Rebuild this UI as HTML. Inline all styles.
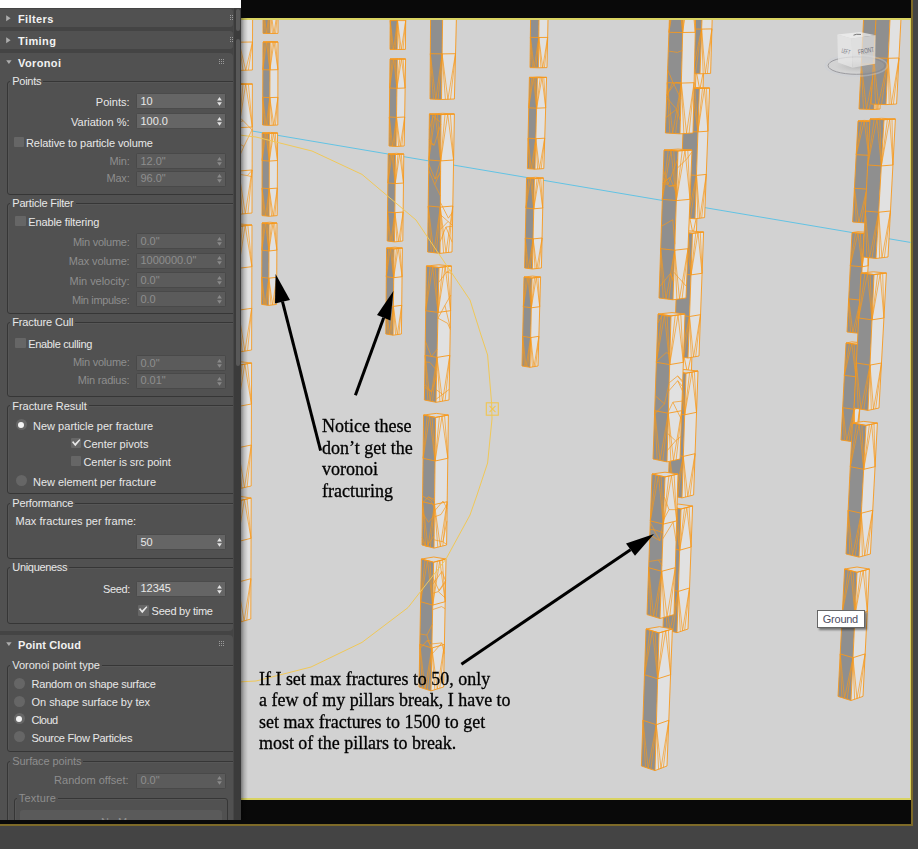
<!DOCTYPE html><html><head><meta charset="utf-8"><title>Voronoi</title><style>
*{margin:0;padding:0;box-sizing:border-box}
html,body{width:918px;height:849px;overflow:hidden;background:#444444}
body{position:relative;font-family:"Liberation Sans",sans-serif;font-size:11px;color:#e8e8e8}
.abs{position:absolute}
#frame{left:0;top:0;width:913px;height:826px;background:#090909;border-right:2px solid #7d6a28;border-bottom:2px solid #7d6a28}
#vp{left:236px;top:18px;width:675px;height:782px;background:#d2d2d2;border-top:2px solid #d9d362;border-bottom:2px solid #d9d362;border-right:1px solid #d9d362}
#white{left:0;top:0;width:241px;height:8px;background:#fff}
#panel{left:0;top:8px;width:241px;height:811.5px;background:#444444;overflow:hidden}
#pshadow{left:241px;top:18px;width:7px;height:802px;background:linear-gradient(to right,rgba(0,0,0,.42),rgba(0,0,0,.16) 45%,rgba(0,0,0,0))}
.ro{position:absolute;left:0;width:233px;background:#515151}
.hd{position:absolute;left:18px;font-weight:bold;font-size:11px;color:#f2f2f2;white-space:nowrap;line-height:14px}
.grp{position:absolute;border:1px solid #363636;border-radius:3px;box-shadow:inset 1px 1px 0 rgba(255,255,255,.04)}
.t{position:absolute;white-space:nowrap;line-height:14px;height:14px;font-size:11px}
.gl{background:#515151;padding:0 2px}
.dis{color:#8e8e8e}
.fld{position:absolute;left:136.4px;width:89.9px;height:16px;background:#656565;border-radius:1.5px;border:1px solid #4b4b4b}
.fld.d{background:#5b5b5b;border-color:#494949}
.fld .v{position:absolute;left:3px;top:-0.4px;line-height:14.5px;font-size:11px;white-space:nowrap}
.cb{position:absolute;width:10.5px;height:10.5px;background:#666666;border-radius:1px}
.rd{position:absolute;width:11px;height:11px;border-radius:50%;background:#666666}
.note{font-family:"Liberation Serif",serif;color:#000;white-space:nowrap;will-change:transform;-webkit-text-stroke:0.3px #000}
.rd.on::after{content:"";position:absolute;left:2.5px;top:2.5px;width:6px;height:6px;border-radius:50%;background:#f4f4f4}
</style></head><body>
<div id="frame" class="abs"></div>
<div id="vp" class="abs"></div>
<svg class="abs" style="left:0;top:0" width="918" height="849" viewBox="0 0 918 849"><defs><clipPath id="vpc"><rect x="236" y="20" width="674.5" height="778"/></clipPath></defs><g clip-path="url(#vpc)"><path d="M252 131 L911 242.5" stroke="#62c3e4" stroke-width="1" fill="none"/>
<polygon points="225.7,-14 239.2,-14 238.9,70.4 225.4,70" fill="#8f8f8f"/><polygon points="239.2,-14 252.7,-14 252.4,70 238.9,70.4" fill="#e1e1e1"/><polygon points="225.7,-14 239.2,-14 252.7,-14 239.2,-14.4" fill="#d9d9d9" stroke="#f7991c" stroke-width="0.85" stroke-linejoin="round"/><path d="M225.7 -14 L225.4 70 L238.9 70.4 L252.4 70 L252.7 -14M239.2 -14 L238.9 70.4M225.7 -14 L239.2 -14 L252.7 -14M225.6 14 L239.1 14 L252.6 14M225.5 42 L239 42.2 L252.5 42" fill="none" stroke="#f7991c" stroke-width="0.85" stroke-linejoin="round"/><path d="M225.6 14 L232.5 -14 L239.1 14M225.6 14 L229.8 -14M239.1 14 L235.2 -14M239.1 14 L246 -14 L252.6 14M239.1 14 L243.3 -14M252.6 14 L248.7 -14M225.5 42 L232.2 70.2 L239 42.2M225.5 42 L229.5 70.1M239 42.2 L234.9 70.3M239 42.2 L245.7 70.2 L252.5 42M239 42.2 L243 70.3M252.5 42 L248.4 70.1" fill="none" stroke="#f7991c" stroke-width="0.66" stroke-linejoin="round"/>
<polygon points="225.4,84 238.9,84.5 238.5,214.3 225,213" fill="#8f8f8f"/><polygon points="238.9,84.5 252.4,84 252,213 238.5,214.3" fill="#e1e1e1"/><polygon points="225.4,84 238.9,84.5 252.4,84 238.9,83.4" fill="#d9d9d9" stroke="#f7991c" stroke-width="0.85" stroke-linejoin="round"/><path d="M225.4 84 L225 213 L238.5 214.3 L252 213 L252.4 84M238.9 84.5 L238.5 214.3M225.4 84 L238.9 84.5 L252.4 84M225.3 127 L238.8 127.7 L252.3 127M225.1 170 L238.6 171 L252.1 170" fill="none" stroke="#f7991c" stroke-width="0.85" stroke-linejoin="round"/><path d="M225.3 127 L232.2 84.2 L238.8 127.7M225.3 127 L229.5 84.1M238.8 127.7 L234.9 84.3M238.8 127.7 L245.7 84.2 L252.3 127M238.8 127.7 L243 84.3M252.3 127 L248.4 84.1M225.1 170 L231.8 213.6 L238.6 171M225.1 170 L229.1 213.4M238.6 171 L234.5 213.9M238.6 171 L245.3 213.6 L252.1 170M238.6 171 L242.6 213.9M252.1 170 L248 213.4M225.3 128 L234.9 117.6 L238.8 133.5M234.9 117.6 L238.8 120.1M225.3 115.4 L230 102.9 L238.8 113.5M230 102.9 L225.3 111M238.8 117 L243.2 120.7 L252.3 130.2M243.2 120.7 L238.8 122.5M225.2 139.1 L230 140.8 L238.7 142.1M230 140.8 L225.3 132.3M238.6 174.2 L247.3 175.6 L252.1 176.8M247.3 175.6 L252.1 170.3M225.2 143.1 L229.9 137.3 L238.7 153.1M229.9 137.3 L225.2 136.7M238.7 143.4 L243.9 146.4 L252.3 129.3M243.9 146.4 L238.7 158.1" fill="none" stroke="#f7991c" stroke-width="0.66" stroke-linejoin="round"/>
<polygon points="225,225 238.5,226.4 238.1,352.2 224.6,350" fill="#8f8f8f"/><polygon points="238.5,226.4 252,225 251.6,350 238.1,352.2" fill="#e1e1e1"/><polygon points="225,225 238.5,226.4 252,225 238.5,223.9" fill="#d9d9d9" stroke="#f7991c" stroke-width="0.85" stroke-linejoin="round"/><path d="M225 225 L224.6 350 L238.1 352.2 L251.6 350 L252 225M238.5 226.4 L238.1 352.2M225 225 L238.5 226.4 L252 225M224.9 266.7 L238.4 268.3 L251.9 266.7M224.7 308.3 L238.2 310.2 L251.7 308.3" fill="none" stroke="#f7991c" stroke-width="0.85" stroke-linejoin="round"/><path d="M224.9 266.7 L231.7 225.7 L238.4 268.3M224.9 266.7 L229 225.4M238.4 268.3 L234.4 226M238.4 268.3 L245.2 225.7 L251.9 266.7M238.4 268.3 L242.5 226M251.9 266.7 L247.9 225.4M224.7 308.3 L231.4 351.1 L238.2 310.2M224.7 308.3 L228.7 350.7M238.2 310.2 L234.1 351.5M238.2 310.2 L244.9 351.1 L251.7 308.3M238.2 310.2 L242.2 351.5M251.7 308.3 L247.6 350.7" fill="none" stroke="#f7991c" stroke-width="0.66" stroke-linejoin="round"/>
<polygon points="224.6,363 238.1,365.3 237.7,489 224.2,486" fill="#8f8f8f"/><polygon points="238.1,365.3 251.6,363 251.2,486 237.7,489" fill="#e1e1e1"/><polygon points="224.6,363 238.1,365.3 251.6,363 238.1,361.5" fill="#d9d9d9" stroke="#f7991c" stroke-width="0.85" stroke-linejoin="round"/><path d="M224.6 363 L224.2 486 L237.7 489 L251.2 486 L251.6 363M238.1 365.3 L237.7 489M224.6 363 L238.1 365.3 L251.6 363M224.4 404 L237.9 406.5 L251.4 404M224.3 445 L237.8 447.8 L251.3 445" fill="none" stroke="#f7991c" stroke-width="0.85" stroke-linejoin="round"/><path d="M224.4 404 L231.3 364.1 L237.9 406.5M224.4 404 L228.6 363.7M237.9 406.5 L234 364.6M237.9 406.5 L244.8 364.1 L251.4 404M237.9 406.5 L242.1 364.6M251.4 404 L247.5 363.7M224.3 445 L231 487.5 L237.8 447.8M224.3 445 L228.3 486.9M237.8 447.8 L233.7 488.1M237.8 447.8 L244.5 487.5 L251.3 445M237.8 447.8 L241.8 488.1M251.3 445 L247.2 486.9" fill="none" stroke="#f7991c" stroke-width="0.66" stroke-linejoin="round"/>
<polygon points="224.2,498 237.7,501.1 237.3,622.9 223.8,619" fill="#8f8f8f"/><polygon points="237.7,501.1 251.2,498 250.8,619 237.3,622.9" fill="#e1e1e1"/><polygon points="224.2,498 237.7,501.1 251.2,498 237.7,496" fill="#d9d9d9" stroke="#f7991c" stroke-width="0.85" stroke-linejoin="round"/><path d="M224.2 498 L223.8 619 L237.3 622.9 L250.8 619 L251.2 498M237.7 501.1 L237.3 622.9M224.2 498 L237.7 501.1 L251.2 498M224 538.3 L237.5 541.7 L251 538.3M223.9 578.7 L237.4 582.3 L250.9 578.7" fill="none" stroke="#f7991c" stroke-width="0.85" stroke-linejoin="round"/><path d="M224 538.3 L230.9 499.6 L237.5 541.7M224 538.3 L228.2 498.9M237.5 541.7 L233.6 500.2M237.5 541.7 L244.4 499.6 L251 538.3M237.5 541.7 L241.7 500.2M251 538.3 L247.1 498.9M223.9 578.7 L230.6 620.9 L237.4 582.3M223.9 578.7 L227.9 620.2M237.4 582.3 L233.3 621.7M237.4 582.3 L244.1 620.9 L250.9 578.7M237.4 582.3 L241.4 621.7M250.9 578.7 L246.8 620.2" fill="none" stroke="#f7991c" stroke-width="0.66" stroke-linejoin="round"/>
<polygon points="263.2,-50 270.2,-50 270.1,33.5 263,33.4" fill="#8f8f8f"/><polygon points="270.2,-50 278.2,-50 278,33.4 270.1,33.5" fill="#e1e1e1"/><polygon points="263.2,-50 270.2,-50 278.2,-50 271.1,-50.4" fill="#d9d9d9" stroke="#f7991c" stroke-width="0.9" stroke-linejoin="round"/><path d="M263.2 -50 L263 33.4 L270.1 33.5 L278 33.4 L278.2 -50M270.2 -50 L270.1 33.5M263.2 -50 L270.2 -50 L278.2 -50M263.1 -22.2 L270.2 -22.2 L278.1 -22.2M263.1 5.6 L270.1 5.6 L278.1 5.6" fill="none" stroke="#f7991c" stroke-width="0.9" stroke-linejoin="round"/><path d="M263.1 -22.2 L266.7 -50 L270.2 -22.2M263.1 -22.2 L265.3 -50M270.2 -22.2 L268.1 -50M270.2 -22.2 L274.2 -50 L278.1 -22.2M270.2 -22.2 L272.6 -50M278.1 -22.2 L275.8 -50M263.1 5.6 L266.5 33.4 L270.1 5.6M263.1 5.6 L265.1 33.4M270.1 5.6 L267.9 33.5M270.1 5.6 L274 33.4 L278.1 5.6M270.1 5.6 L272.4 33.5M278.1 5.6 L275.6 33.4" fill="none" stroke="#f7991c" stroke-width="0.70" stroke-linejoin="round"/>
<polygon points="263,42 270.1,42.1 269.7,125.4 262.6,125" fill="#8f8f8f"/><polygon points="270.1,42.1 278,42 277.8,125 269.7,125.4" fill="#e1e1e1"/><polygon points="263,42 270.1,42.1 278,42 270.9,41.5" fill="#d9d9d9" stroke="#f7991c" stroke-width="0.9" stroke-linejoin="round"/><path d="M263 42 L262.6 125 L269.7 125.4 L277.8 125 L278 42M270.1 42.1 L269.7 125.4M263 42 L270.1 42.1 L278 42M262.9 69.7 L269.9 69.9 L277.9 69.7M262.7 97.3 L269.8 97.6 L277.9 97.3" fill="none" stroke="#f7991c" stroke-width="0.9" stroke-linejoin="round"/><path d="M262.9 69.7 L266.5 42.1 L269.9 69.9M262.9 69.7 L265.1 42M269.9 69.9 L267.9 42.1M269.9 69.9 L274 42.1 L277.9 69.7M269.9 69.9 L272.4 42.1M277.9 69.7 L275.6 42M262.7 97.3 L266.2 125.2 L269.8 97.6M262.7 97.3 L264.7 125.1M269.8 97.6 L267.6 125.3M269.8 97.6 L273.8 125.2 L277.9 97.3M269.8 97.6 L272.2 125.3M277.9 97.3 L275.4 125.1" fill="none" stroke="#f7991c" stroke-width="0.70" stroke-linejoin="round"/>
<polygon points="262.2,133 269.4,133.4 269.1,216.3 262,215.6" fill="#8f8f8f"/><polygon points="269.4,133.4 277.6,133 277.2,215.6 269.1,216.3" fill="#e1e1e1"/><polygon points="262.2,133 269.4,133.4 277.6,133 270.4,132.4" fill="#d9d9d9" stroke="#f7991c" stroke-width="0.9" stroke-linejoin="round"/><path d="M262.2 133 L262 215.6 L269.1 216.3 L277.2 215.6 L277.6 133M269.4 133.4 L269.1 216.3M262.2 133 L269.4 133.4 L277.6 133M262.1 160.5 L269.3 161.1 L277.5 160.5M262.1 188.1 L269.2 188.7 L277.3 188.1" fill="none" stroke="#f7991c" stroke-width="0.9" stroke-linejoin="round"/><path d="M262.1 160.5 L265.8 133.2 L269.3 161.1M262.1 160.5 L264.4 133.1M269.3 161.1 L267.3 133.3M269.3 161.1 L273.5 133.2 L277.5 160.5M269.3 161.1 L271.9 133.3M277.5 160.5 L275.2 133.1M262.1 188.1 L265.6 216 L269.2 188.7M262.1 188.1 L264.1 215.8M269.2 188.7 L267 216.1M269.2 188.7 L273.2 216 L277.3 188.1M269.2 188.7 L271.6 216.1M277.3 188.1 L274.8 215.8" fill="none" stroke="#f7991c" stroke-width="0.70" stroke-linejoin="round"/>
<polygon points="262,223 269.1,223.8 268.7,305.4 261.6,304.4" fill="#8f8f8f"/><polygon points="269.1,223.8 277,223 276.6,304.4 268.7,305.4" fill="#e1e1e1"/><polygon points="262,223 269.1,223.8 277,223 269.9,222.2" fill="#d9d9d9" stroke="#f7991c" stroke-width="0.9" stroke-linejoin="round"/><path d="M262 223 L261.6 304.4 L268.7 305.4 L276.6 304.4 L277 223M269.1 223.8 L268.7 305.4M262 223 L269.1 223.8 L277 223M261.9 250.1 L268.9 251 L276.9 250.1M261.7 277.3 L268.8 278.2 L276.7 277.3" fill="none" stroke="#f7991c" stroke-width="0.9" stroke-linejoin="round"/><path d="M261.9 250.1 L265.5 223.4 L268.9 251M261.9 250.1 L264.1 223.2M268.9 251 L266.9 223.5M268.9 251 L273 223.4 L276.9 250.1M268.9 251 L271.4 223.5M276.9 250.1 L274.6 223.2M261.7 277.3 L265.1 304.9 L268.8 278.2M261.7 277.3 L263.7 304.7M268.8 278.2 L266.5 305.1M268.8 278.2 L272.6 304.9 L276.7 277.3M268.8 278.2 L271 305.1M276.7 277.3 L274.2 304.7" fill="none" stroke="#f7991c" stroke-width="0.70" stroke-linejoin="round"/>
<polygon points="390.6,-37 397.9,-37 397.2,49.5 390,49.4" fill="#8f8f8f"/><polygon points="397.9,-37 406.2,-37 405.4,49.4 397.2,49.5" fill="#e1e1e1"/><polygon points="390.6,-37 397.9,-37 406.2,-37 398.9,-37.4" fill="#d9d9d9" stroke="#f7991c" stroke-width="0.9" stroke-linejoin="round"/><path d="M390.6 -37 L390 49.4 L397.2 49.5 L405.4 49.4 L406.2 -37M397.9 -37 L397.2 49.5M390.6 -37 L397.9 -37 L406.2 -37M390.4 -8.2 L397.7 -8.2 L405.9 -8.2M390.2 20.6 L397.5 20.6 L405.7 20.6" fill="none" stroke="#f7991c" stroke-width="0.9" stroke-linejoin="round"/><path d="M390.4 -8.2 L394.3 -37 L397.7 -8.2M390.4 -8.2 L392.8 -37M397.7 -8.2 L395.7 -37M397.7 -8.2 L402.1 -37 L405.9 -8.2M397.7 -8.2 L400.4 -37M405.9 -8.2 L403.7 -37M390.2 20.6 L393.6 49.5 L397.5 20.6M390.2 20.6 L392.2 49.4M397.5 20.6 L395.1 49.5M397.5 20.6 L401.3 49.5 L405.7 20.6M397.5 20.6 L399.7 49.5M405.7 20.6 L403 49.4" fill="none" stroke="#f7991c" stroke-width="0.70" stroke-linejoin="round"/>
<polygon points="390,59 397.3,59.2 396.1,146.5 389,146" fill="#8f8f8f"/><polygon points="397.3,59.2 405.6,59 404.2,146 396.1,146.5" fill="#e1e1e1"/><polygon points="390,59 397.3,59.2 405.6,59 398.3,58.5" fill="#d9d9d9" stroke="#f7991c" stroke-width="0.9" stroke-linejoin="round"/><path d="M390 59 L389 146 L396.1 146.5 L404.2 146 L405.6 59M397.3 59.2 L396.1 146.5M390 59 L397.3 59.2 L405.6 59M389.7 88 L396.9 88.3 L405.1 88M389.3 117 L396.5 117.4 L404.7 117" fill="none" stroke="#f7991c" stroke-width="0.9" stroke-linejoin="round"/><path d="M389.7 88 L393.7 59.1 L396.9 88.3M389.7 88 L392.2 59.1M396.9 88.3 L395.1 59.1M396.9 88.3 L401.5 59.1 L405.1 88M396.9 88.3 L399.8 59.1M405.1 88 L403.1 59.1M389.3 117 L392.6 146.2 L396.5 117.4M389.3 117 L391.1 146.1M396.5 117.4 L394 146.3M396.5 117.4 L400.2 146.2 L404.7 117M396.5 117.4 L398.6 146.3M404.7 117 L401.8 146.1" fill="none" stroke="#f7991c" stroke-width="0.70" stroke-linejoin="round"/>
<polygon points="388.2,154 395.5,154.5 394.5,241.9 387.2,241" fill="#8f8f8f"/><polygon points="395.5,154.5 403.8,154 402.8,241 394.5,241.9" fill="#e1e1e1"/><polygon points="388.2,154 395.5,154.5 403.8,154 396.5,153.3" fill="#d9d9d9" stroke="#f7991c" stroke-width="0.9" stroke-linejoin="round"/><path d="M388.2 154 L387.2 241 L394.5 241.9 L402.8 241 L403.8 154M395.5 154.5 L394.5 241.9M388.2 154 L395.5 154.5 L403.8 154M387.9 183 L395.2 183.6 L403.5 183M387.5 212 L394.9 212.7 L403.1 212" fill="none" stroke="#f7991c" stroke-width="0.9" stroke-linejoin="round"/><path d="M387.9 183 L391.9 154.3 L395.2 183.6M387.9 183 L390.4 154.2M395.2 183.6 L393.3 154.4M395.2 183.6 L399.7 154.3 L403.5 183M395.2 183.6 L398 154.4M403.5 183 L401.3 154.2M387.5 212 L390.9 241.4 L394.9 212.7M387.5 212 L389.4 241.3M394.9 212.7 L392.3 241.6M394.9 212.7 L398.7 241.4 L403.1 212M394.9 212.7 L397 241.6M403.1 212 L400.3 241.3" fill="none" stroke="#f7991c" stroke-width="0.70" stroke-linejoin="round"/>
<polygon points="386.6,248 394,248.9 393.1,335.2 385.8,334" fill="#8f8f8f"/><polygon points="394,248.9 402.4,248 401.4,334 393.1,335.2" fill="#e1e1e1"/><polygon points="386.6,248 394,248.9 402.4,248 395,247.2" fill="#d9d9d9" stroke="#f7991c" stroke-width="0.9" stroke-linejoin="round"/><path d="M386.6 248 L385.8 334 L393.1 335.2 L401.4 334 L402.4 248M394 248.9 L393.1 335.2M386.6 248 L394 248.9 L402.4 248M386.3 276.7 L393.7 277.7 L402.1 276.7M386.1 305.3 L393.4 306.4 L401.7 305.3" fill="none" stroke="#f7991c" stroke-width="0.9" stroke-linejoin="round"/><path d="M386.3 276.7 L390.3 248.4 L393.7 277.7M386.3 276.7 L388.8 248.3M393.7 277.7 L391.8 248.6M393.7 277.7 L398.2 248.4 L402.1 276.7M393.7 277.7 L396.5 248.6M402.1 276.7 L399.9 248.3M386.1 305.3 L389.5 334.6 L393.4 306.4M386.1 305.3 L388 334.4M393.4 306.4 L390.9 334.8M393.4 306.4 L397.3 334.6 L401.7 305.3M393.4 306.4 L395.6 334.8M401.7 305.3 L398.9 334.4" fill="none" stroke="#f7991c" stroke-width="0.70" stroke-linejoin="round"/>
<polygon points="531.1,-23 539.5,-23 538.4,67.8 530,67.6" fill="#8f8f8f"/><polygon points="539.5,-23 548.9,-23 547,67.6 538.4,67.8" fill="#e1e1e1"/><polygon points="531.1,-23 539.5,-23 548.9,-23 540.5,-23.4" fill="#d9d9d9" stroke="#f7991c" stroke-width="0.9" stroke-linejoin="round"/><path d="M531.1 -23 L530 67.6 L538.4 67.8 L547 67.6 L548.9 -23M539.5 -23 L538.4 67.8M531.1 -23 L539.5 -23 L548.9 -23M530.7 7.2 L539.1 7.2 L548.2 7.2M530.4 37.4 L538.8 37.5 L547.6 37.4" fill="none" stroke="#f7991c" stroke-width="0.9" stroke-linejoin="round"/><path d="M530.7 7.2 L535.3 -23 L539.1 7.2M530.7 7.2 L533.6 -23M539.1 7.2 L537 -23M539.1 7.2 L544.2 -23 L548.2 7.2M539.1 7.2 L542.3 -23M548.2 7.2 L546.1 -23M530.4 37.4 L534.2 67.7 L538.8 37.5M530.4 37.4 L532.5 67.7M538.8 37.5 L535.9 67.8M538.8 37.5 L542.7 67.7 L547.6 37.4M538.8 37.5 L541 67.8M547.6 37.4 L544.4 67.7" fill="none" stroke="#f7991c" stroke-width="0.70" stroke-linejoin="round"/>
<polygon points="529.4,77.4 537.4,77.7 535,169.2 527.4,168.6" fill="#8f8f8f"/><polygon points="537.4,77.7 546.6,77.4 543.8,168.6 535,169.2" fill="#e1e1e1"/><polygon points="529.4,77.4 537.4,77.7 546.6,77.4 538.6,76.9" fill="#d9d9d9" stroke="#f7991c" stroke-width="0.9" stroke-linejoin="round"/><path d="M529.4 77.4 L527.4 168.6 L535 169.2 L543.8 168.6 L546.6 77.4M537.4 77.7 L535 169.2M529.4 77.4 L537.4 77.7 L546.6 77.4M528.7 107.8 L536.6 108.2 L545.7 107.8M528.1 138.2 L535.8 138.7 L544.7 138.2" fill="none" stroke="#f7991c" stroke-width="0.9" stroke-linejoin="round"/><path d="M528.7 107.8 L533.4 77.5 L536.6 108.2M528.7 107.8 L531.8 77.5M536.6 108.2 L535 77.6M536.6 108.2 L542 77.5 L545.7 107.8M536.6 108.2 L540.2 77.6M545.7 107.8 L543.8 77.5M528.1 138.2 L531.2 168.9 L535.8 138.7M528.1 138.2 L529.7 168.8M535.8 138.7 L532.7 169M535.8 138.7 L539.4 168.9 L544.7 138.2M535.8 138.7 L537.6 169M544.7 138.2 L541.2 168.8" fill="none" stroke="#f7991c" stroke-width="0.70" stroke-linejoin="round"/>
<polygon points="526.6,178 534.4,178.7 532.4,269 524.6,268" fill="#8f8f8f"/><polygon points="534.4,178.7 543.4,178 541.4,268 532.4,269" fill="#e1e1e1"/><polygon points="526.6,178 534.4,178.7 543.4,178 535.6,177.3" fill="#d9d9d9" stroke="#f7991c" stroke-width="0.9" stroke-linejoin="round"/><path d="M526.6 178 L524.6 268 L532.4 269 L541.4 268 L543.4 178M534.4 178.7 L532.4 269M526.6 178 L534.4 178.7 L543.4 178M525.9 208 L533.7 208.8 L542.7 208M525.3 238 L533.1 238.9 L542.1 238" fill="none" stroke="#f7991c" stroke-width="0.9" stroke-linejoin="round"/><path d="M525.9 208 L530.5 178.3 L533.7 208.8M525.9 208 L528.9 178.2M533.7 208.8 L532.1 178.5M533.7 208.8 L538.9 178.3 L542.7 208M533.7 208.8 L537.1 178.5M542.7 208 L540.7 178.2M525.3 238 L528.5 268.5 L533.1 238.9M525.3 238 L526.9 268.3M533.1 238.9 L530.1 268.7M533.1 238.9 L536.9 268.5 L542.1 238M533.1 238.9 L535.1 268.7M542.1 238 L538.7 268.3" fill="none" stroke="#f7991c" stroke-width="0.70" stroke-linejoin="round"/>
<polygon points="524,277 532,278 530,367.3 522,366" fill="#8f8f8f"/><polygon points="532,278 540.6,277 538,366 530,367.3" fill="#e1e1e1"/><polygon points="524,277 532,278 540.6,277 532.6,276.1" fill="#d9d9d9" stroke="#f7991c" stroke-width="0.9" stroke-linejoin="round"/><path d="M524 277 L522 366 L530 367.3 L538 366 L540.6 277M532 278 L530 367.3M524 277 L532 278 L540.6 277M523.3 306.7 L531.3 307.8 L539.7 306.7M522.7 336.3 L530.7 337.6 L538.9 336.3" fill="none" stroke="#f7991c" stroke-width="0.9" stroke-linejoin="round"/><path d="M523.3 306.7 L528 277.5 L531.3 307.8M523.3 306.7 L526.4 277.3M531.3 307.8 L529.6 277.7M531.3 307.8 L536.3 277.5 L539.7 306.7M531.3 307.8 L534.6 277.7M539.7 306.7 L538 277.3M522.7 336.3 L526 366.7 L530.7 337.6M522.7 336.3 L524.4 366.4M530.7 337.6 L527.6 366.9M530.7 337.6 L534 366.7 L538.9 336.3M530.7 337.6 L532.4 366.9M538.9 336.3 L535.6 366.4" fill="none" stroke="#f7991c" stroke-width="0.70" stroke-linejoin="round"/>
<polygon points="431,-37 443.4,-37 441.5,99.5 430,99" fill="#8f8f8f"/><polygon points="443.4,-37 457.8,-37 454.4,99 441.5,99.5" fill="#e1e1e1"/><polygon points="431,-37 443.4,-37 457.8,-37 445.4,-37.4" fill="#d9d9d9" stroke="#f7991c" stroke-width="0.9" stroke-linejoin="round"/><path d="M431 -37 L430 99 L441.5 99.5 L454.4 99 L457.8 -37M443.4 -37 L441.5 99.5M431 -37 L443.4 -37 L457.8 -37M430.7 8.3 L442.7 8.3 L456.7 8.3M430.3 53.7 L442.1 53.9 L455.5 53.7" fill="none" stroke="#f7991c" stroke-width="0.9" stroke-linejoin="round"/><path d="M430.7 8.3 L437.2 -37 L442.7 8.3M430.7 8.3 L434.7 -37M442.7 8.3 L439.7 -37M442.7 8.3 L450.6 -37 L456.7 8.3M442.7 8.3 L447.7 -37M456.7 8.3 L453.5 -37M430.3 53.7 L435.8 99.3 L442.1 53.9M430.3 53.7 L433.4 99.2M442.1 53.9 L438.1 99.4M442.1 53.9 L447.9 99.3 L455.5 53.7M442.1 53.9 L445.4 99.4M455.5 53.7 L450.5 99.2" fill="none" stroke="#f7991c" stroke-width="0.70" stroke-linejoin="round"/>
<polygon points="429.4,114 441,114.6 440,253.4 427.6,252" fill="#8f8f8f"/><polygon points="441,114.6 454.4,114 452,252 440,253.4" fill="#e1e1e1"/><polygon points="429.4,114 441,114.6 454.4,114 442.8,113.3" fill="#d9d9d9" stroke="#f7991c" stroke-width="0.9" stroke-linejoin="round"/><path d="M429.4 114 L427.6 252 L440 253.4 L452 252 L454.4 114M441 114.6 L440 253.4M429.4 114 L441 114.6 L454.4 114M428.8 160 L440.7 160.9 L453.6 160M428.2 206 L440.3 207.1 L452.8 206" fill="none" stroke="#f7991c" stroke-width="0.9" stroke-linejoin="round"/><path d="M428.8 160 L435.2 114.3 L440.7 160.9M428.8 160 L432.9 114.2M440.7 160.9 L437.5 114.4M440.7 160.9 L447.7 114.3 L453.6 160M440.7 160.9 L445 114.4M453.6 160 L450.4 114.2M428.2 206 L433.8 252.7 L440.3 207.1M428.2 206 L431.3 252.4M440.3 207.1 L436.3 253M440.3 207.1 L446 252.7 L452.8 206M440.3 207.1 L443.6 253M452.8 206 L448.4 252.4M440.1 241.7 L445.9 227 L452.2 242.3M445.9 227 L452.4 226.3M429.2 129.4 L433.2 116.3 L440.9 122.5M440.4 202.4 L448.4 218.2 L452.7 211.9M428.7 164 L435.1 179.1 L440.7 160.1M435.1 179.1 L440.6 173.7M428.7 170.3 L434.8 184.6 L440.6 171.1M434.8 184.6 L440.4 195.8M440.2 229.5 L448.1 221.5 L452.5 225.4M448.1 221.5 L440.3 214.6M429.1 139.7 L434.1 145.3 L440.9 124.2M434.1 145.3 L429 142.7" fill="none" stroke="#f7991c" stroke-width="0.70" stroke-linejoin="round"/>
<polygon points="426.4,266 439,267.5 436,402.3 424.4,400" fill="#8f8f8f"/><polygon points="439,267.5 451.4,266 449,400 436,402.3" fill="#e1e1e1"/><polygon points="426.4,266 439,267.5 451.4,266 438.8,264.8" fill="#d9d9d9" stroke="#f7991c" stroke-width="0.9" stroke-linejoin="round"/><path d="M426.4 266 L424.4 400 L436 402.3 L449 400 L451.4 266M439 267.5 L436 402.3M426.4 266 L439 267.5 L451.4 266M425.7 310.7 L438 312.4 L450.6 310.7M425.1 355.3 L437 357.4 L449.8 355.3" fill="none" stroke="#f7991c" stroke-width="0.9" stroke-linejoin="round"/><path d="M425.7 310.7 L432.7 266.8 L438 312.4M425.7 310.7 L430.2 266.5M438 312.4 L435.2 267.1M438 312.4 L445.2 266.8 L450.6 310.7M438 312.4 L442.7 267.1M450.6 310.7 L447.7 266.5M425.1 355.3 L430.2 401.1 L437 357.4M425.1 355.3 L427.9 400.7M437 357.4 L432.5 401.6M437 357.4 L442.5 401.1 L449.8 355.3M437 357.4 L439.9 401.6M449.8 355.3 L445.1 400.7M425.3 341 L431.4 356.6 L437.2 349.1M436.3 389.7 L442.6 394.4 L449.2 389.4M442.6 394.4 L436.1 399.2M438.7 282.4 L446.3 272.2 L451.3 270M446.3 272.2 L451.3 273.2M424.6 387.1 L431.6 391.9 L436.6 375.4M431.6 391.9 L424.6 384.2M437.9 318.4 L444.9 305.4 L450.3 327.8M444.9 305.4 L450.9 295M425 362 L429.8 362.3 L436.7 370.3M437.9 318.1 L447.7 323.4 L450.3 329.6" fill="none" stroke="#f7991c" stroke-width="0.70" stroke-linejoin="round"/>
<polygon points="423.6,415 435.6,417.4 434,548.1 422,545" fill="#8f8f8f"/><polygon points="435.6,417.4 448.4,415 446.6,545 434,548.1" fill="#e1e1e1"/><polygon points="423.6,415 435.6,417.4 448.4,415 436.4,413.4" fill="#d9d9d9" stroke="#f7991c" stroke-width="0.9" stroke-linejoin="round"/><path d="M423.6 415 L422 545 L434 548.1 L446.6 545 L448.4 415M435.6 417.4 L434 548.1M423.6 415 L435.6 417.4 L448.4 415M423.1 458.3 L435.1 461 L447.8 458.3M422.5 501.7 L434.5 504.5 L447.2 501.7" fill="none" stroke="#f7991c" stroke-width="0.9" stroke-linejoin="round"/><path d="M423.1 458.3 L429.6 416.2 L435.1 461M423.1 458.3 L427.2 415.7M435.1 461 L432 416.7M435.1 461 L442 416.2 L447.8 458.3M435.1 461 L439.4 416.7M447.8 458.3 L444.6 415.7M422.5 501.7 L428 546.6 L434.5 504.5M422.5 501.7 L425.6 545.9M434.5 504.5 L430.4 547.2M434.5 504.5 L440.3 546.6 L447.2 501.7M434.5 504.5 L437.8 547.2M447.2 501.7 L442.8 545.9M422.5 503 L428.3 496.9 L434.6 501.7M428.3 496.9 L434.6 499.4M422.6 496 L431 500.9 L434.5 507.9M434.5 511 L443 501 L447.1 508.6M434.4 516.9 L441 514.5 L447.2 504.4M422.1 537.1 L426.2 546.6 L434.1 535.9M426.2 546.6 L422.1 540.8M434.1 539.8 L442.9 541.8 L446.9 521.2M442.9 541.8 L446.6 544.4M422.4 513 L428.5 522.3 L434.4 515.3" fill="none" stroke="#f7991c" stroke-width="0.70" stroke-linejoin="round"/>
<polygon points="421.4,559 433.6,562.2 431,690.9 419,687" fill="#8f8f8f"/><polygon points="433.6,562.2 446,559 443.6,687 431,690.9" fill="#e1e1e1"/><polygon points="421.4,559 433.6,562.2 446,559 433.8,557" fill="#d9d9d9" stroke="#f7991c" stroke-width="0.9" stroke-linejoin="round"/><path d="M421.4 559 L419 687 L431 690.9 L443.6 687 L446 559M433.6 562.2 L431 690.9M421.4 559 L433.6 562.2 L446 559M420.6 601.7 L432.7 605.1 L445.2 601.7M419.8 644.3 L431.9 648 L444.4 644.3" fill="none" stroke="#f7991c" stroke-width="0.9" stroke-linejoin="round"/><path d="M420.6 601.7 L427.5 560.6 L432.7 605.1M420.6 601.7 L425.1 560M432.7 605.1 L429.9 561.2M432.7 605.1 L439.8 560.6 L445.2 601.7M432.7 605.1 L437.3 561.2M445.2 601.7 L442.3 560M419.8 644.3 L425 689 L431.9 648M419.8 644.3 L422.6 688.2M431.9 648 L427.4 689.8M431.9 648 L437.3 689 L444.4 644.3M431.9 648 L434.8 689.8M444.4 644.3 L439.8 688.2M433.3 578.7 L439.2 590.8 L445.6 582.2M419.7 648.9 L427.1 640.6 L432 641.1M427.1 640.6 L431.9 646.4M420 634 L426.9 635.1 L431.8 651.2M426.9 635.1 L432.3 624.4M431.9 643.9 L441.9 642.9 L444.2 653.6M441.9 642.9 L431.7 654.4M433 593.3 L438.3 591.6 L445.3 598M438.3 591.6 L445.6 580.5M432.6 609.6 L441.6 606.6 L445.1 608.7M433.2 583.8 L441.9 571.4 L445.6 580.8" fill="none" stroke="#f7991c" stroke-width="0.70" stroke-linejoin="round"/>
<polygon points="696,70 703.6,70 703,90 695.4,90" fill="#e1e1e1" stroke="#f7991c" stroke-width="0.9"/><path d="M696 70 L699.8 90 L703.6 70" fill="none" stroke="#f7991c" stroke-width="0.8"/>
<polygon points="689,214 697,214 696.4,234 688.4,234" fill="#e1e1e1" stroke="#f7991c" stroke-width="0.9"/><path d="M689 214 L693 234 L697 214" fill="none" stroke="#f7991c" stroke-width="0.8"/>
<polygon points="683,352 692,352 691.4,373 682.4,373" fill="#e1e1e1" stroke="#f7991c" stroke-width="0.9"/><path d="M683 352 L687.5 373 L692 352" fill="none" stroke="#f7991c" stroke-width="0.8"/>
<polygon points="688.2,-60 704.9,-60 700,73.8 684.5,73.4" fill="#8f8f8f"/><polygon points="704.9,-60 714.5,-60 710.6,73.4 700,73.8" fill="#e1e1e1"/><polygon points="688.2,-60 704.9,-60 714.5,-60 697.8,-60.4" fill="#d9d9d9" stroke="#f7991c" stroke-width="0.9" stroke-linejoin="round"/><path d="M688.2 -60 L684.5 73.4 L700 73.8 L710.6 73.4 L714.5 -60M704.9 -60 L700 73.8M688.2 -60 L704.9 -60 L714.5 -60M687 -15.5 L703.3 -15.5 L713.2 -15.5M685.7 28.9 L701.6 29.1 L711.9 28.9" fill="none" stroke="#f7991c" stroke-width="0.9" stroke-linejoin="round"/><path d="M687 -15.5 L696.5 -60 L703.3 -15.5M687 -15.5 L693.2 -60M703.3 -15.5 L699.9 -60M703.3 -15.5 L709.7 -60 L713.2 -15.5M703.3 -15.5 L707.8 -60M713.2 -15.5 L711.6 -60M685.7 28.9 L692.2 73.6 L701.6 29.1M685.7 28.9 L689.1 73.5M701.6 29.1 L695.4 73.7M701.6 29.1 L705.3 73.6 L711.9 28.9M701.6 29.1 L703.2 73.7M711.9 28.9 L707.4 73.5" fill="none" stroke="#f7991c" stroke-width="0.70" stroke-linejoin="round"/>
<polygon points="684.5,88 699.4,88.5 695,218.8 680,217.6" fill="#8f8f8f"/><polygon points="699.4,88.5 709.6,88 704.6,217.6 695,218.8" fill="#e1e1e1"/><polygon points="684.5,88 699.4,88.5 709.6,88 694.7,87.4" fill="#d9d9d9" stroke="#f7991c" stroke-width="0.9" stroke-linejoin="round"/><path d="M684.5 88 L680 217.6 L695 218.8 L704.6 217.6 L709.6 88M699.4 88.5 L695 218.8M684.5 88 L699.4 88.5 L709.6 88M683 131.2 L697.9 131.9 L707.9 131.2M681.5 174.4 L696.5 175.4 L706.3 174.4" fill="none" stroke="#f7991c" stroke-width="0.9" stroke-linejoin="round"/><path d="M683 131.2 L692 88.2 L697.9 131.9M683 131.2 L689 88.1M697.9 131.9 L694.9 88.3M697.9 131.9 L704.5 88.2 L707.9 131.2M697.9 131.9 L702.5 88.3M707.9 131.2 L706.5 88.1M681.5 174.4 L687.5 218.2 L696.5 175.4M681.5 174.4 L684.5 218M696.5 175.4 L690.5 218.4M696.5 175.4 L699.8 218.2 L706.3 174.4M696.5 175.4 L697.9 218.4M706.3 174.4 L701.7 218" fill="none" stroke="#f7991c" stroke-width="0.70" stroke-linejoin="round"/>
<polygon points="678.5,232 692.5,233.3 688,358 674,356" fill="#8f8f8f"/><polygon points="692.5,233.3 703.6,232 699,356 688,358" fill="#e1e1e1"/><polygon points="678.5,232 692.5,233.3 703.6,232 689.6,230.9" fill="#d9d9d9" stroke="#f7991c" stroke-width="0.9" stroke-linejoin="round"/><path d="M678.5 232 L674 356 L688 358 L699 356 L703.6 232M692.5 233.3 L688 358M678.5 232 L692.5 233.3 L703.6 232M677 273.3 L691 274.9 L702.1 273.3M675.5 314.7 L689.5 316.5 L700.5 314.7" fill="none" stroke="#f7991c" stroke-width="0.9" stroke-linejoin="round"/><path d="M677 273.3 L685.5 232.7 L691 274.9M677 273.3 L682.7 232.4M691 274.9 L688.3 232.9M691 274.9 L698 232.7 L702.1 273.3M691 274.9 L695.8 232.9M702.1 273.3 L700.3 232.4M675.5 314.7 L681 357 L689.5 316.5M675.5 314.7 L678.2 356.6M689.5 316.5 L683.8 357.4M689.5 316.5 L693.5 357 L700.5 314.7M689.5 316.5 L691.3 357.4M700.5 314.7 L695.7 356.6" fill="none" stroke="#f7991c" stroke-width="0.70" stroke-linejoin="round"/>
<polygon points="672,371 686,373.2 682,497.9 668,495" fill="#8f8f8f"/><polygon points="686,373.2 698,371 693.6,495 682,497.9" fill="#e1e1e1"/><polygon points="672,371 686,373.2 698,371 684,369.5" fill="#d9d9d9" stroke="#f7991c" stroke-width="0.9" stroke-linejoin="round"/><path d="M672 371 L668 495 L682 497.9 L693.6 495 L698 371M686 373.2 L682 497.9M672 371 L686 373.2 L698 371M670.7 412.3 L684.7 414.8 L696.5 412.3M669.3 453.7 L683.3 456.4 L695.1 453.7" fill="none" stroke="#f7991c" stroke-width="0.9" stroke-linejoin="round"/><path d="M670.7 412.3 L679 372.1 L684.7 414.8M670.7 412.3 L676.2 371.7M684.7 414.8 L681.8 372.6M684.7 414.8 L692 372.1 L696.5 412.3M684.7 414.8 L689.6 372.6M696.5 412.3 L694.4 371.7M669.3 453.7 L675 496.5 L683.3 456.4M669.3 453.7 L672.2 495.9M683.3 456.4 L677.8 497.1M683.3 456.4 L687.8 496.5 L695.1 453.7M683.3 456.4 L685.5 497.1M695.1 453.7 L690.1 495.9" fill="none" stroke="#f7991c" stroke-width="0.70" stroke-linejoin="round"/>
<polygon points="667,506 681,509 677,632.7 663,629" fill="#8f8f8f"/><polygon points="681,509 692.6,506 688,629 677,632.7" fill="#e1e1e1"/><polygon points="667,506 681,509 692.6,506 678.6,504.1" fill="#d9d9d9" stroke="#f7991c" stroke-width="0.9" stroke-linejoin="round"/><path d="M667 506 L663 629 L677 632.7 L688 629 L692.6 506M681 509 L677 632.7M667 506 L681 509 L692.6 506M665.7 547 L679.7 550.2 L691.1 547M664.3 588 L678.3 591.4 L689.5 588" fill="none" stroke="#f7991c" stroke-width="0.9" stroke-linejoin="round"/><path d="M665.7 547 L674 507.5 L679.7 550.2M665.7 547 L671.2 506.9M679.7 550.2 L676.8 508.1M679.7 550.2 L686.8 507.5 L691.1 547M679.7 550.2 L684.5 508.1M691.1 547 L689.1 506.9M664.3 588 L670 630.8 L678.3 591.4M664.3 588 L667.2 630.1M678.3 591.4 L672.8 631.6M678.3 591.4 L682.5 630.8 L689.5 588M678.3 591.4 L680.3 631.6M689.5 588 L684.7 630.1" fill="none" stroke="#f7991c" stroke-width="0.70" stroke-linejoin="round"/>
<polygon points="670.7,-18 684,-18 680,133.8 665.4,133" fill="#8f8f8f"/><polygon points="684,-18 696.4,-18 693,133 680,133.8" fill="#e1e1e1"/><polygon points="670.7,-18 684,-18 696.4,-18 683.2,-18.4" fill="#d9d9d9" stroke="#f7991c" stroke-width="0.9" stroke-linejoin="round"/><path d="M670.7 -18 L665.4 133 L680 133.8 L693 133 L696.4 -18M684 -18 L680 133.8M670.7 -18 L684 -18 L696.4 -18M668.9 32.3 L682.6 32.5 L695.3 32.3M667.2 82.7 L681.3 83.1 L694.1 82.7" fill="none" stroke="#f7991c" stroke-width="0.9" stroke-linejoin="round"/><path d="M668.9 32.3 L677.3 -18 L682.6 32.5M668.9 32.3 L674.7 -18M682.6 32.5 L680 -18M682.6 32.5 L690.2 -18 L695.3 32.3M682.6 32.5 L687.7 -18M695.3 32.3 L692.7 -18M667.2 82.7 L672.7 133.4 L681.3 83.1M667.2 82.7 L669.8 133.2M681.3 83.1 L675.6 133.6M681.3 83.1 L686.5 133.4 L694.1 82.7M681.3 83.1 L683.9 133.6M694.1 82.7 L689.1 133.2M666.7 95 L675.4 82.6 L681.3 82.5M675.4 82.6 L681.3 83.3M666.7 96.1 L672.8 82.1 L680.9 98.9M672.8 82.1 L667.6 69.7M683.7 -6.7 L690.9 7.6 L696.4 -18M690.9 7.6 L695.9 8M668.3 51 L677.3 52.4 L682.2 50.5M665.9 117.6 L676.6 109.2 L680.3 120.5M676.6 109.2 L666.6 97.5" fill="none" stroke="#f7991c" stroke-width="0.70" stroke-linejoin="round"/>
<polygon points="664,150 678,150.9 673,299.8 659,298" fill="#8f8f8f"/><polygon points="678,150.9 692,150 686,298 673,299.8" fill="#e1e1e1"/><polygon points="664,150 678,150.9 692,150 678,149.1" fill="#d9d9d9" stroke="#f7991c" stroke-width="0.9" stroke-linejoin="round"/><path d="M664 150 L659 298 L673 299.8 L686 298 L692 150M678 150.9 L673 299.8M664 150 L678 150.9 L692 150M662.3 199.3 L676.3 200.6 L690 199.3M660.7 248.7 L674.7 250.2 L688 248.7" fill="none" stroke="#f7991c" stroke-width="0.9" stroke-linejoin="round"/><path d="M662.3 199.3 L671 150.5 L676.3 200.6M662.3 199.3 L668.2 150.3M676.3 200.6 L673.8 150.6M676.3 200.6 L685 150.5 L690 199.3M676.3 200.6 L682.2 150.6M690 199.3 L687.8 150.3M660.7 248.7 L666 298.9 L674.7 250.2M660.7 248.7 L663.2 298.6M674.7 250.2 L668.8 299.3M674.7 250.2 L679.5 298.9 L688 248.7M674.7 250.2 L676.9 299.3M688 248.7 L682.1 298.6M677.4 168.1 L687.4 158.3 L691.9 151.9M663.1 178 L668.8 186.2 L676.9 184.8M668.8 186.2 L676.8 185.8M663.3 169.9 L668.2 184.2 L677.7 158.9M668.2 184.2 L662.8 184.1M662.9 183.5 L669.7 177.6 L676.6 192.6M669.7 177.6 L662.9 183M661.4 226.3 L672.8 219.7 L674.9 244.2M659.4 286.8 L670.4 273.6 L673.7 280.2M670.4 273.6 L673.6 282.1M673.9 272.2 L678.6 277.7 L686.5 286.4" fill="none" stroke="#f7991c" stroke-width="0.70" stroke-linejoin="round"/>
<polygon points="658,314 671,315.9 667,461.9 653,459" fill="#8f8f8f"/><polygon points="671,315.9 685,314 680,459 667,461.9" fill="#e1e1e1"/><polygon points="658,314 671,315.9 685,314 672,312.6" fill="#d9d9d9" stroke="#f7991c" stroke-width="0.9" stroke-linejoin="round"/><path d="M658 314 L653 459 L667 461.9 L680 459 L685 314M671 315.9 L667 461.9M658 314 L671 315.9 L685 314M656.3 362.3 L669.7 364.6 L683.3 362.3M654.7 410.7 L668.3 413.2 L681.7 410.7" fill="none" stroke="#f7991c" stroke-width="0.9" stroke-linejoin="round"/><path d="M656.3 362.3 L664.5 315 L669.7 364.6M656.3 362.3 L661.9 314.6M669.7 364.6 L667.1 315.4M669.7 364.6 L678 315 L683.3 362.3M669.7 364.6 L675.2 315.4M683.3 362.3 L680.8 314.6M654.7 410.7 L660 460.4 L668.3 413.2M654.7 410.7 L657.2 459.9M668.3 413.2 L662.8 461M668.3 413.2 L673.5 460.4 L681.7 410.7M668.3 413.2 L670.9 461M681.7 410.7 L676.1 459.9M655.2 395.7 L664.5 403.9 L669.1 383.8M664.5 403.9 L654.5 414.2M657.7 323.4 L662.3 315 L671 317.1M669.2 382.8 L677.6 376 L682.6 382.3M677.6 376 L682.7 380.9M667.3 450.5 L675.6 440.8 L680.8 436.6M675.6 440.8 L667.8 433.6M668.4 411.5 L672.9 402.2 L681.4 419.5M672.9 402.2 L682 401.1M668.9 390.8 L677.7 380.7 L682.5 386.5M677.7 380.7 L682.4 390.8M656.4 361.4 L666.2 352.6 L670 354.2" fill="none" stroke="#f7991c" stroke-width="0.70" stroke-linejoin="round"/>
<polygon points="652,474 665,476.9 660,618.5 647,614.6" fill="#8f8f8f"/><polygon points="665,476.9 678,474 674,614.6 660,618.5" fill="#e1e1e1"/><polygon points="652,474 665,476.9 678,474 665,472.2" fill="#d9d9d9" stroke="#f7991c" stroke-width="0.9" stroke-linejoin="round"/><path d="M652 474 L647 614.6 L660 618.5 L674 614.6 L678 474M665 476.9 L660 618.5M652 474 L665 476.9 L678 474M650.3 520.9 L663.3 524.1 L676.7 520.9M648.7 567.7 L661.7 571.3 L675.3 567.7" fill="none" stroke="#f7991c" stroke-width="0.9" stroke-linejoin="round"/><path d="M650.3 520.9 L658.5 475.4 L663.3 524.1M650.3 520.9 L655.9 474.9M663.3 524.1 L661.1 476M663.3 524.1 L671.5 475.4 L676.7 520.9M663.3 524.1 L668.9 476M676.7 520.9 L674.1 474.9M648.7 567.7 L653.5 616.5 L661.7 571.3M648.7 567.7 L650.9 615.8M661.7 571.3 L656.1 617.3M661.7 571.3 L667 616.5 L675.3 567.7M661.7 571.3 L664.2 617.3M675.3 567.7 L669.8 615.8M648.9 561.5 L658.3 560 L662.1 559.8M658.3 560 L661.9 565.3M662.8 538.8 L673.1 522.1 L676.1 541.1M663.5 519.9 L669 509.6 L677 509.7M669 509.6 L664.3 497M650.3 522.7 L659.9 540.7 L663.5 519.9M659.9 540.7 L649.8 535M650 529.3 L655.6 530.1 L663 532.7" fill="none" stroke="#f7991c" stroke-width="0.70" stroke-linejoin="round"/>
<polygon points="646,629 659,632.9 655,770.6 641.4,766" fill="#8f8f8f"/><polygon points="659,632.9 672.4,629 667,766 655,770.6" fill="#e1e1e1"/><polygon points="646,629 659,632.9 672.4,629 659.4,626.7" fill="#d9d9d9" stroke="#f7991c" stroke-width="0.9" stroke-linejoin="round"/><path d="M646 629 L641.4 766 L655 770.6 L667 766 L672.4 629M659 632.9 L655 770.6M646 629 L659 632.9 L672.4 629M644.5 674.7 L657.7 678.8 L670.6 674.7M642.9 720.3 L656.3 724.7 L668.8 720.3" fill="none" stroke="#f7991c" stroke-width="0.9" stroke-linejoin="round"/><path d="M644.5 674.7 L652.5 630.9 L657.7 678.8M644.5 674.7 L649.9 630.2M657.7 678.8 L655.1 631.7M657.7 678.8 L665.7 630.9 L670.6 674.7M657.7 678.8 L663 631.7M670.6 674.7 L668.4 630.2M642.9 720.3 L648.2 768.3 L656.3 724.7M642.9 720.3 L645.5 767.4M656.3 724.7 L650.9 769.2M656.3 724.7 L661 768.3 L668.8 720.3M656.3 724.7 L658.6 769.2M668.8 720.3 L663.4 767.4" fill="none" stroke="#f7991c" stroke-width="0.70" stroke-linejoin="round"/>
<polygon points="865.9,-26 877.6,-26 874,109.5 859,109" fill="#8f8f8f"/><polygon points="877.6,-26 883,-26 880,109 874,109.5" fill="#e1e1e1"/><polygon points="865.9,-26 877.6,-26 883,-26 871.3,-26.4" fill="#d9d9d9" stroke="#f7991c" stroke-width="0.9" stroke-linejoin="round"/><path d="M865.9 -26 L859 109 L874 109.5 L880 109 L883 -26M877.6 -26 L874 109.5M865.9 -26 L877.6 -26 L883 -26M863.6 19 L876.4 19 L882 19M861.3 64 L875.2 64.3 L881 64" fill="none" stroke="#f7991c" stroke-width="0.9" stroke-linejoin="round"/><path d="M863.6 19 L871.8 -26 L876.4 19M863.6 19 L869.4 -26M876.4 19 L874.1 -26M876.4 19 L880.3 -26 L882 19M876.4 19 L879.2 -26M882 19 L881.4 -26M861.3 64 L866.5 109.2 L875.2 64.3M861.3 64 L863.5 109.1M875.2 64.3 L869.5 109.3M875.2 64.3 L877 109.2 L881 64M875.2 64.3 L875.8 109.3M881 64 L878.2 109.1" fill="none" stroke="#f7991c" stroke-width="0.70" stroke-linejoin="round"/>
<polygon points="858,121 870.4,121.5 865,222.9 852.6,222" fill="#8f8f8f"/><polygon points="870.4,121.5 876.5,121 871,222 865,222.9" fill="#e1e1e1"/><polygon points="858,121 870.4,121.5 876.5,121 864.1,120.4" fill="#d9d9d9" stroke="#f7991c" stroke-width="0.9" stroke-linejoin="round"/><path d="M858 121 L852.6 222 L865 222.9 L871 222 L876.5 121M870.4 121.5 L865 222.9M858 121 L870.4 121.5 L876.5 121M856.2 154.7 L868.6 155.3 L874.7 154.7M854.4 188.3 L866.8 189.1 L872.8 188.3" fill="none" stroke="#f7991c" stroke-width="0.9" stroke-linejoin="round"/><path d="M856.2 154.7 L864.2 121.2 L868.6 155.3M856.2 154.7 L861.7 121.1M868.6 155.3 L866.7 121.3M868.6 155.3 L873.5 121.2 L874.7 154.7M868.6 155.3 L872.2 121.3M874.7 154.7 L874.7 121.1M854.4 188.3 L858.8 222.5 L866.8 189.1M854.4 188.3 L856.3 222.3M866.8 189.1 L861.3 222.6M866.8 189.1 L868 222.5 L872.8 188.3M866.8 189.1 L866.8 222.6M872.8 188.3 L869.2 222.3" fill="none" stroke="#f7991c" stroke-width="0.70" stroke-linejoin="round"/>
<polygon points="852,232.6 864,233.5 858.6,333.3 847,332" fill="#8f8f8f"/><polygon points="864,233.5 870,232.6 864.5,332 858.6,333.3" fill="#e1e1e1"/><polygon points="852,232.6 864,233.5 870,232.6 858,231.7" fill="#d9d9d9" stroke="#f7991c" stroke-width="0.9" stroke-linejoin="round"/><path d="M852 232.6 L847 332 L858.6 333.3 L864.5 332 L870 232.6M864 233.5 L858.6 333.3M852 232.6 L864 233.5 L870 232.6M850.3 265.7 L862.2 266.8 L868.2 265.7M848.7 298.9 L860.4 300.1 L866.3 298.9" fill="none" stroke="#f7991c" stroke-width="0.9" stroke-linejoin="round"/><path d="M850.3 265.7 L858 233.1 L862.2 266.8M850.3 265.7 L855.6 232.9M862.2 266.8 L860.4 233.3M862.2 266.8 L867 233.1 L868.2 265.7M862.2 266.8 L865.8 233.3M868.2 265.7 L868.2 232.9M848.7 298.9 L852.8 332.7 L860.4 300.1M848.7 298.9 L850.5 332.4M860.4 300.1 L855.1 332.9M860.4 300.1 L861.5 332.7 L866.3 298.9M860.4 300.1 L860.4 332.9M866.3 298.9 L862.7 332.4" fill="none" stroke="#f7991c" stroke-width="0.70" stroke-linejoin="round"/>
<polygon points="846,343 857.6,344.4 852.4,441.7 841,440" fill="#8f8f8f"/><polygon points="857.6,344.4 863.5,343 858,440 852.4,441.7" fill="#e1e1e1"/><polygon points="846,343 857.6,344.4 863.5,343 851.9,341.9" fill="#d9d9d9" stroke="#f7991c" stroke-width="0.9" stroke-linejoin="round"/><path d="M846 343 L841 440 L852.4 441.7 L858 440 L863.5 343M857.6 344.4 L852.4 441.7M846 343 L857.6 344.4 L863.5 343M844.3 375.3 L855.9 376.8 L861.7 375.3M842.7 407.7 L854.1 409.3 L859.8 407.7" fill="none" stroke="#f7991c" stroke-width="0.9" stroke-linejoin="round"/><path d="M844.3 375.3 L851.8 343.7 L855.9 376.8M844.3 375.3 L849.5 343.4M855.9 376.8 L854.1 344M855.9 376.8 L860.5 343.7 L861.7 375.3M855.9 376.8 L859.4 344M861.7 375.3 L861.7 343.4M842.7 407.7 L846.7 440.9 L854.1 409.3M842.7 407.7 L844.4 440.5M854.1 409.3 L849 441.2M854.1 409.3 L855.2 440.9 L859.8 407.7M854.1 409.3 L854.1 441.2M859.8 407.7 L856.3 440.5" fill="none" stroke="#f7991c" stroke-width="0.70" stroke-linejoin="round"/>
<polygon points="879.1,-34 892.5,-34 886,104.6 871,104" fill="#8f8f8f"/><polygon points="892.5,-34 903.7,-34 896.6,104 886,104.6" fill="#e1e1e1"/><polygon points="879.1,-34 892.5,-34 903.7,-34 890.4,-34.4" fill="#d9d9d9" stroke="#f7991c" stroke-width="0.9" stroke-linejoin="round"/><path d="M879.1 -34 L871 104 L886 104.6 L896.6 104 L903.7 -34M892.5 -34 L886 104.6M879.1 -34 L892.5 -34 L903.7 -34M876.4 12 L890.3 12 L901.4 12M873.7 58 L888.2 58.3 L899 58" fill="none" stroke="#f7991c" stroke-width="0.9" stroke-linejoin="round"/><path d="M876.4 12 L885.8 -34 L890.3 12M876.4 12 L883.1 -34M890.3 12 L888.5 -34M890.3 12 L898.1 -34 L901.4 12M890.3 12 L895.9 -34M901.4 12 L900.4 -34M873.7 58 L878.5 104.3 L888.2 58.3M873.7 58 L875.5 104.2M888.2 58.3 L881.5 104.4M888.2 58.3 L891.3 104.3 L899 58M888.2 58.3 L889.2 104.4M899 58 L893.4 104.2" fill="none" stroke="#f7991c" stroke-width="0.70" stroke-linejoin="round"/>
<polygon points="870,119 884,119.7 876,258.5 863,257" fill="#8f8f8f"/><polygon points="884,119.7 895.4,119 888,257 876,258.5" fill="#e1e1e1"/><polygon points="870,119 884,119.7 895.4,119 881.4,118.3" fill="#d9d9d9" stroke="#f7991c" stroke-width="0.9" stroke-linejoin="round"/><path d="M870 119 L863 257 L876 258.5 L888 257 L895.4 119M884 119.7 L876 258.5M870 119 L884 119.7 L895.4 119M867.7 165 L881.3 165.9 L892.9 165M865.3 211 L878.7 212.2 L890.5 211" fill="none" stroke="#f7991c" stroke-width="0.9" stroke-linejoin="round"/><path d="M867.7 165 L877 119.3 L881.3 165.9M867.7 165 L874.2 119.2M881.3 165.9 L879.8 119.5M881.3 165.9 L889.7 119.3 L892.9 165M881.3 165.9 L887.4 119.5M892.9 165 L892 119.2M865.3 211 L869.5 257.7 L878.7 212.2M865.3 211 L866.9 257.4M878.7 212.2 L872.1 258M878.7 212.2 L882 257.7 L890.5 211M878.7 212.2 L879.6 258M890.5 211 L884.4 257.4" fill="none" stroke="#f7991c" stroke-width="0.70" stroke-linejoin="round"/>
<polygon points="861,273 874,274.6 868,410.4 854,408" fill="#8f8f8f"/><polygon points="874,274.6 886.4,273 879,408 868,410.4" fill="#e1e1e1"/><polygon points="861,273 874,274.6 886.4,273 873.4,271.8" fill="#d9d9d9" stroke="#f7991c" stroke-width="0.9" stroke-linejoin="round"/><path d="M861 273 L854 408 L868 410.4 L879 408 L886.4 273M874 274.6 L868 410.4M861 273 L874 274.6 L886.4 273M858.7 318 L872 319.8 L883.9 318M856.3 363 L870 365.1 L881.5 363" fill="none" stroke="#f7991c" stroke-width="0.9" stroke-linejoin="round"/><path d="M858.7 318 L867.5 273.8 L872 319.8M858.7 318 L864.9 273.5M872 319.8 L870.1 274.1M872 319.8 L880.2 273.8 L883.9 318M872 319.8 L877.7 274.1M883.9 318 L882.7 273.5M856.3 363 L861 409.2 L870 365.1M856.3 363 L858.2 408.7M870 365.1 L863.8 409.6M870 365.1 L873.5 409.2 L881.5 363M870 365.1 L871.3 409.6M881.5 363 L875.7 408.7" fill="none" stroke="#f7991c" stroke-width="0.70" stroke-linejoin="round"/>
<polygon points="852.4,423 866,425.4 859,557.1 846,554" fill="#8f8f8f"/><polygon points="866,425.4 877.4,423 870.4,554 859,557.1" fill="#e1e1e1"/><polygon points="852.4,423 866,425.4 877.4,423 863.8,421.4" fill="#d9d9d9" stroke="#f7991c" stroke-width="0.9" stroke-linejoin="round"/><path d="M852.4 423 L846 554 L859 557.1 L870.4 554 L877.4 423M866 425.4 L859 557.1M852.4 423 L866 425.4 L877.4 423M850.3 466.7 L863.7 469.3 L875.1 466.7M848.1 510.3 L861.3 513.2 L872.7 510.3" fill="none" stroke="#f7991c" stroke-width="0.9" stroke-linejoin="round"/><path d="M850.3 466.7 L859.2 424.2 L863.7 469.3M850.3 466.7 L856.5 423.7M863.7 469.3 L861.9 424.7M863.7 469.3 L871.7 424.2 L875.1 466.7M863.7 469.3 L869.4 424.7M875.1 466.7 L874 423.7M848.1 510.3 L852.5 555.6 L861.3 513.2M848.1 510.3 L849.9 554.9M861.3 513.2 L855.1 556.2M861.3 513.2 L864.7 555.6 L872.7 510.3M861.3 513.2 L862.4 556.2M872.7 510.3 L867 554.9" fill="none" stroke="#f7991c" stroke-width="0.70" stroke-linejoin="round"/>
<polygon points="844.6,569 857,572.3 851,700.5 838,696.4" fill="#8f8f8f"/><polygon points="857,572.3 869.4,569 863,696.4 851,700.5" fill="#e1e1e1"/><polygon points="844.6,569 857,572.3 869.4,569 857,567" fill="#d9d9d9" stroke="#f7991c" stroke-width="0.9" stroke-linejoin="round"/><path d="M844.6 569 L838 696.4 L851 700.5 L863 696.4 L869.4 569M857 572.3 L851 700.5M844.6 569 L857 572.3 L869.4 569M842.4 611.5 L855 615 L867.3 611.5M840.2 653.9 L853 657.7 L865.1 653.9" fill="none" stroke="#f7991c" stroke-width="0.9" stroke-linejoin="round"/><path d="M842.4 611.5 L850.8 570.6 L855 615M842.4 611.5 L848.3 570M855 615 L853.3 571.3M855 615 L863.2 570.6 L867.3 611.5M855 615 L860.7 571.3M867.3 611.5 L865.7 570M840.2 653.9 L844.5 698.4 L853 657.7M840.2 653.9 L841.9 697.6M853 657.7 L847.1 699.2M853 657.7 L857 698.4 L865.1 653.9M853 657.7 L854.6 699.2M865.1 653.9 L859.4 697.6" fill="none" stroke="#f7991c" stroke-width="0.70" stroke-linejoin="round"/>
<path d="M241 135.2 L256 137 L312 151 L362 174.4 L416 220 L470 300 L481 335 L487.6 355 L491.6 403 L492 419 L487.6 463 L477 495 L470 515 L446 559 L408 607.6 L362 642.4 L311 667 L256 681 L241 681.8" stroke="#f0c858" stroke-width="1" fill="none" stroke-linejoin="round"/><g stroke="#f1c651" stroke-width="1.1" fill="none"><rect x="486.3" y="402.8" width="12" height="12.4"/><path d="M489.5 405.8 L495.5 412.2 M495.5 405.8 L489.5 412.2"/></g><path d="M282.5 301.7 L320.6 450.6" stroke="#000" stroke-width="3.0" fill="none"/><polygon points="275.6,274 275,303.4 290,300" fill="#000"/><path d="M383.7 317.7 L355.4 395.2" stroke="#000" stroke-width="3.0" fill="none"/><polygon points="393.4,291 377,315 390.4,320.4" fill="#000"/><path d="M630.5 549.7 L461.4 664.2" stroke="#000" stroke-width="3.0" fill="none"/><polygon points="654,534 626,543.6 635,555.8" fill="#000"/></g></svg>
<div class="abs note" style="left:321.8px;top:415.97px;font-size:18.0px;line-height:21.55px;letter-spacing:0px">Notice these<br>don’t get the<br>voronoi<br>fracturing</div>
<div class="abs note" style="left:259.2px;top:669.39px;font-size:17.95px;line-height:21.35px;letter-spacing:0px">If I set max fractures to 50, only<br>a few of my pillars break, I have to<br>set max fractures to 1500 to get<br>most of the pillars to break.</div>
<div class="abs" style="left:817px;top:610px;width:48px;height:18px;background:#fff;border:1px solid #666;box-shadow:2px 2px 2px rgba(0,0,0,.45);color:#4d4d62;font-size:11px;line-height:17px;padding-left:4.8px;white-space:nowrap;letter-spacing:-0.25px" id="tip">Ground</div>
<svg class="abs" style="left:815px;top:22px" width="95" height="70" viewBox="815 22 95 70">
<defs><radialGradient id="vsh" cx="0.5" cy="0.5" r="0.5"><stop offset="0" stop-color="#9a9a9a" stop-opacity=".55"/><stop offset="1" stop-color="#b0b0b0" stop-opacity="0"/></radialGradient></defs>
<ellipse cx="856.4" cy="65.6" rx="31" ry="10.5" fill="none" stroke="rgba(200,206,216,.4)" stroke-width="1.6"/>
<ellipse cx="856.4" cy="65.6" rx="28.3" ry="8.7" fill="rgba(222,222,222,.12)" stroke="#8c8c92" stroke-width="0.8"/>
<ellipse cx="857" cy="66" rx="22" ry="7" fill="url(#vsh)"/>
<g opacity="0.72">
<polygon points="837.3,34.5 860,32 875.6,35.2 851.6,38.5" fill="#f2f2f2"/>
<polygon points="837.3,34.5 851.6,38.5 852.6,67.7 838,62.6" fill="#e9e9e9"/>
<polygon points="851.6,38.5 875.6,35.2 875.2,63.8 852.6,67.7" fill="#e4e4e4"/>
</g>
<path d="M853.5 35.2 L856.5 34.3 L861 34.4" stroke="#555" stroke-width="0.8" fill="none"/>
<text x="846" y="53.6" font-family="Liberation Sans, sans-serif" font-size="6.5" fill="#70707a" text-anchor="middle" transform="rotate(14 846 51)" textLength="8.5" lengthAdjust="spacingAndGlyphs">LEFT</text>
<text x="866" y="53.2" font-family="Liberation Sans, sans-serif" font-size="7.2" fill="#70707a" text-anchor="middle" transform="rotate(-11 866 51)" textLength="16" lengthAdjust="spacingAndGlyphs">FRONT</text>
</svg>
<div id="pshadow" class="abs"></div>
<div id="white" class="abs"></div>
<div id="panel" class="abs">
<div class="ro" style="top:1px;height:18.1px;border-radius:0 3px 3px 0"></div>
<svg class="abs" style="left:6px;top:7.0px" width="5" height="7"><path d="M0.2 0.2 L4.6 3.2 L0.2 6.2 Z" fill="#adadad"/></svg>
<span class="hd" style="top:4.1px;letter-spacing:0.381px">Filters</span>
<svg class="abs" style="left:230px;top:6.6px" width="6" height="6"><rect x="0" y="0" width="1" height="1" fill="#9a9a9a"/><rect x="0" y="2" width="1" height="1" fill="#9a9a9a"/><rect x="0" y="4" width="1" height="1" fill="#9a9a9a"/><rect x="2" y="0" width="1" height="1" fill="#9a9a9a"/><rect x="2" y="2" width="1" height="1" fill="#9a9a9a"/><rect x="2" y="4" width="1" height="1" fill="#9a9a9a"/><rect x="4" y="0" width="1" height="1" fill="#9a9a9a"/><rect x="4" y="2" width="1" height="1" fill="#9a9a9a"/><rect x="4" y="4" width="1" height="1" fill="#9a9a9a"/></svg>
<div class="ro" style="top:22.5px;height:18.5px;border-radius:0 3px 3px 0"></div>
<svg class="abs" style="left:6px;top:29.0px" width="5" height="7"><path d="M0.2 0.2 L4.6 3.2 L0.2 6.2 Z" fill="#adadad"/></svg>
<span class="hd" style="top:26.200000000000003px;letter-spacing:0.408px">Timing</span>
<svg class="abs" style="left:230px;top:28.6px" width="6" height="6"><rect x="0" y="0" width="1" height="1" fill="#9a9a9a"/><rect x="0" y="2" width="1" height="1" fill="#9a9a9a"/><rect x="0" y="4" width="1" height="1" fill="#9a9a9a"/><rect x="2" y="0" width="1" height="1" fill="#9a9a9a"/><rect x="2" y="2" width="1" height="1" fill="#9a9a9a"/><rect x="2" y="4" width="1" height="1" fill="#9a9a9a"/><rect x="4" y="0" width="1" height="1" fill="#9a9a9a"/><rect x="4" y="2" width="1" height="1" fill="#9a9a9a"/><rect x="4" y="4" width="1" height="1" fill="#9a9a9a"/></svg>
<div class="ro" style="top:44.5px;height:578px;border-radius:0 4px 4px 0"></div>
<svg class="abs" style="left:5.8px;top:52px" width="7" height="5"><path d="M0.2 0.3 L5.6 0.3 L2.9 4 Z" fill="#adadad"/></svg>
<span class="hd" style="top:48.1px;letter-spacing:0.378px">Voronoi</span>
<svg class="abs" style="left:218.5px;top:50.7px" width="6" height="6"><rect x="0" y="0" width="1" height="1" fill="#9a9a9a"/><rect x="0" y="2" width="1" height="1" fill="#9a9a9a"/><rect x="0" y="4" width="1" height="1" fill="#9a9a9a"/><rect x="2" y="0" width="1" height="1" fill="#9a9a9a"/><rect x="2" y="2" width="1" height="1" fill="#9a9a9a"/><rect x="2" y="4" width="1" height="1" fill="#9a9a9a"/><rect x="4" y="0" width="1" height="1" fill="#9a9a9a"/><rect x="4" y="2" width="1" height="1" fill="#9a9a9a"/><rect x="4" y="4" width="1" height="1" fill="#9a9a9a"/></svg>
<div class="ro" style="top:626.5px;height:200px;border-radius:0 4px 0 0"></div>
<svg class="abs" style="left:5.8px;top:634px" width="7" height="5"><path d="M0.2 0.3 L5.6 0.3 L2.9 4 Z" fill="#adadad"/></svg>
<span class="hd" style="top:630.1px;letter-spacing:0.118px">Point Cloud</span>
<svg class="abs" style="left:218.5px;top:632.7px" width="6" height="6"><rect x="0" y="0" width="1" height="1" fill="#9a9a9a"/><rect x="0" y="2" width="1" height="1" fill="#9a9a9a"/><rect x="0" y="4" width="1" height="1" fill="#9a9a9a"/><rect x="2" y="0" width="1" height="1" fill="#9a9a9a"/><rect x="2" y="2" width="1" height="1" fill="#9a9a9a"/><rect x="2" y="4" width="1" height="1" fill="#9a9a9a"/><rect x="4" y="0" width="1" height="1" fill="#9a9a9a"/><rect x="4" y="2" width="1" height="1" fill="#9a9a9a"/><rect x="4" y="4" width="1" height="1" fill="#9a9a9a"/></svg>
<div class="grp" style="left:6.6px;top:72.5px;width:233.4px;height:114.5px"></div>
<span class="t gl" style="top:65.7px;left:10.3px;letter-spacing:-0.296px;">Points</span>
<span class="t" style="top:86.5px;right:111.5px;">Points:</span>
<div class="fld" style="top:85.0px"><span class="v">10</span><svg class="abs" style="left:78.9px;top:1.9px" width="7" height="11" viewBox="0 0 7 11"><path d="M3.5 0.9 L5.9 4.4 L1.1 4.4 Z M1.1 6.3 L5.9 6.3 L3.5 9.8 Z" fill="#e4e4e4"/></svg></div>
<span class="t" style="top:106.5px;right:111.5px;">Variation %:</span>
<div class="fld" style="top:105.0px"><span class="v">100.0</span><svg class="abs" style="left:78.9px;top:1.9px" width="7" height="11" viewBox="0 0 7 11"><path d="M3.5 0.9 L5.9 4.4 L1.1 4.4 Z M1.1 6.3 L5.9 6.3 L3.5 9.8 Z" fill="#e4e4e4"/></svg></div>
<div class="cb" style="left:13.6px;top:128.6px"></div>
<span class="t" style="top:128px;left:26px;letter-spacing:-0.078px;">Relative to particle volume</span>
<span class="t dis" style="top:146px;right:111.5px;letter-spacing:-0.194px;">Min:</span>
<div class="fld d" style="top:145.0px"><span class="v dis">12.0"</span><svg class="abs" style="left:78.9px;top:1.9px" width="7" height="11" viewBox="0 0 7 11"><path d="M3.5 0.9 L5.9 4.4 L1.1 4.4 Z M1.1 6.3 L5.9 6.3 L3.5 9.8 Z" fill="#8a8a8a"/></svg></div>
<span class="t dis" style="top:162.5px;right:111.5px;letter-spacing:-0.215px;">Max:</span>
<div class="fld d" style="top:162.5px"><span class="v dis">96.0"</span><svg class="abs" style="left:78.9px;top:1.9px" width="7" height="11" viewBox="0 0 7 11"><path d="M3.5 0.9 L5.9 4.4 L1.1 4.4 Z M1.1 6.3 L5.9 6.3 L3.5 9.8 Z" fill="#8a8a8a"/></svg></div>
<div class="grp" style="left:6.6px;top:195px;width:233.4px;height:111px"></div>
<span class="t gl" style="top:188.2px;left:10.3px;letter-spacing:-0.199px;">Particle Filter</span>
<div class="cb" style="left:15.1px;top:207.6px"></div>
<span class="t" style="top:207px;left:28.3px;letter-spacing:-0.119px;">Enable filtering</span>
<span class="t dis" style="top:226.5px;right:111.5px;letter-spacing:-0.25px;">Min volume:</span>
<div class="fld d" style="top:225.0px"><span class="v dis">0.0"</span><svg class="abs" style="left:78.9px;top:1.9px" width="7" height="11" viewBox="0 0 7 11"><path d="M3.5 0.9 L5.9 4.4 L1.1 4.4 Z M1.1 6.3 L5.9 6.3 L3.5 9.8 Z" fill="#8a8a8a"/></svg></div>
<span class="t dis" style="top:246.0px;right:111.5px;letter-spacing:-0.156px;">Max volume:</span>
<div class="fld d" style="top:244.5px"><span class="v dis">1000000.0"</span><svg class="abs" style="left:78.9px;top:1.9px" width="7" height="11" viewBox="0 0 7 11"><path d="M3.5 0.9 L5.9 4.4 L1.1 4.4 Z M1.1 6.3 L5.9 6.3 L3.5 9.8 Z" fill="#8a8a8a"/></svg></div>
<span class="t dis" style="top:265.5px;right:111.5px;letter-spacing:-0.044px;">Min velocity:</span>
<div class="fld d" style="top:264.0px"><span class="v dis">0.0"</span><svg class="abs" style="left:78.9px;top:1.9px" width="7" height="11" viewBox="0 0 7 11"><path d="M3.5 0.9 L5.9 4.4 L1.1 4.4 Z M1.1 6.3 L5.9 6.3 L3.5 9.8 Z" fill="#8a8a8a"/></svg></div>
<span class="t dis" style="top:284.8px;right:111.5px;letter-spacing:-0.35px;">Min impulse:</span>
<div class="fld d" style="top:283.3px"><span class="v dis">0.0</span><svg class="abs" style="left:78.9px;top:1.9px" width="7" height="11" viewBox="0 0 7 11"><path d="M3.5 0.9 L5.9 4.4 L1.1 4.4 Z M1.1 6.3 L5.9 6.3 L3.5 9.8 Z" fill="#8a8a8a"/></svg></div>
<div class="grp" style="left:6.6px;top:314px;width:233.4px;height:75px"></div>
<span class="t gl" style="top:307.2px;left:10.3px;letter-spacing:-0.156px;">Fracture Cull</span>
<div class="cb" style="left:15.1px;top:329.6px"></div>
<span class="t" style="top:329px;left:28.3px;letter-spacing:-0.346px;">Enable culling</span>
<span class="t dis" style="top:346.8px;right:111.5px;letter-spacing:-0.25px;">Min volume:</span>
<div class="fld d" style="top:347.0px"><span class="v dis">0.0"</span><svg class="abs" style="left:78.9px;top:1.9px" width="7" height="11" viewBox="0 0 7 11"><path d="M3.5 0.9 L5.9 4.4 L1.1 4.4 Z M1.1 6.3 L5.9 6.3 L3.5 9.8 Z" fill="#8a8a8a"/></svg></div>
<span class="t dis" style="top:364.5px;right:111.5px;letter-spacing:-0.18px;">Min radius:</span>
<div class="fld d" style="top:364.7px"><span class="v dis">0.01"</span><svg class="abs" style="left:78.9px;top:1.9px" width="7" height="11" viewBox="0 0 7 11"><path d="M3.5 0.9 L5.9 4.4 L1.1 4.4 Z M1.1 6.3 L5.9 6.3 L3.5 9.8 Z" fill="#8a8a8a"/></svg></div>
<div class="grp" style="left:6.6px;top:397.3px;width:233.4px;height:89.19999999999999px"></div>
<span class="t gl" style="top:390.5px;left:10.3px;letter-spacing:-0.057px;">Fracture Result</span>
<div class="rd on" style="left:15.8px;top:411.3px"></div>
<span class="t" style="top:411px;left:33px;letter-spacing:0.015px;">New particle per fracture</span>
<div class="cb" style="left:70.6px;top:429.6px"><svg width="10.5" height="10.5" viewBox="0 0 10.5 10.5" style="position:absolute;left:0;top:0"><path d="M0.9 4.1 L2.5 3.3 L4.0 5.6 L8.4 1.2 L9.4 2.0 L4.3 8.3 Z" fill="#e9e9e9"/></svg></div>
<span class="t" style="top:429px;left:83.5px;letter-spacing:0.007px;">Center pivots</span>
<div class="cb" style="left:70.6px;top:447.8px"></div>
<span class="t" style="top:447px;left:83.5px;letter-spacing:-0.075px;">Center is src point</span>
<div class="rd" style="left:15.8px;top:467.2px"></div>
<span class="t" style="top:467px;left:33px;letter-spacing:-0.017px;">New element per fracture</span>
<div class="grp" style="left:6.6px;top:494.6px;width:233.4px;height:56.39999999999998px"></div>
<span class="t gl" style="top:487.8px;left:10.3px;letter-spacing:-0.188px;">Performance</span>
<span class="t" style="top:506.29999999999995px;left:15.5px;letter-spacing:0.034px;">Max fractures per frame:</span>
<div class="fld" style="top:526.0px"><span class="v">50</span><svg class="abs" style="left:78.9px;top:1.9px" width="7" height="11" viewBox="0 0 7 11"><path d="M3.5 0.9 L5.9 4.4 L1.1 4.4 Z M1.1 6.3 L5.9 6.3 L3.5 9.8 Z" fill="#e4e4e4"/></svg></div>
<div class="grp" style="left:6.6px;top:559.2px;width:233.4px;height:56.799999999999955px"></div>
<span class="t gl" style="top:552.4000000000001px;left:10.3px;letter-spacing:-0.322px;">Uniqueness</span>
<span class="t" style="top:574px;right:111px;letter-spacing:-0.362px;">Seed:</span>
<div class="fld" style="top:572.8px"><span class="v">12345</span><svg class="abs" style="left:78.9px;top:1.9px" width="7" height="11" viewBox="0 0 7 11"><path d="M3.5 0.9 L5.9 4.4 L1.1 4.4 Z M1.1 6.3 L5.9 6.3 L3.5 9.8 Z" fill="#e4e4e4"/></svg></div>
<div class="cb" style="left:138.4px;top:597.1px"><svg width="10.5" height="10.5" viewBox="0 0 10.5 10.5" style="position:absolute;left:0;top:0"><path d="M0.9 4.1 L2.5 3.3 L4.0 5.6 L8.4 1.2 L9.4 2.0 L4.3 8.3 Z" fill="#e9e9e9"/></svg></div>
<span class="t" style="top:596px;left:151.6px;letter-spacing:-0.255px;">Seed by time</span>
<div class="grp" style="left:6.6px;top:657px;width:233.4px;height:87px"></div>
<span class="t gl" style="top:650.2px;left:10.3px;letter-spacing:-0.022px;">Voronoi point type</span>
<div class="rd" style="left:13.7px;top:669.5px"></div>
<span class="t" style="top:669px;left:31.5px;letter-spacing:-0.206px;">Random on shape surface</span>
<div class="rd" style="left:13.7px;top:687.5px"></div>
<span class="t" style="top:687px;left:31.5px;letter-spacing:-0.033px;">On shape surface by tex</span>
<div class="rd on" style="left:13.7px;top:705.3px"></div>
<span class="t" style="top:704.8px;left:31.5px;letter-spacing:-0.513px;">Cloud</span>
<div class="rd" style="left:13.7px;top:723.3px"></div>
<span class="t" style="top:722.8px;left:31.5px;letter-spacing:-0.274px;">Source Flow Particles</span>
<div class="grp" style="left:6.6px;top:753.2px;width:233.4px;height:79.79999999999995px"></div>
<span class="t dis gl" style="top:746.4000000000001px;left:10.3px;letter-spacing:-0.094px;">Surface points</span>
<span class="t dis" style="top:764.5px;right:112.5px;">Random offset:</span>
<div class="fld d" style="top:764.5px"><span class="v dis">0.0"</span><svg class="abs" style="left:78.9px;top:1.9px" width="7" height="11" viewBox="0 0 7 11"><path d="M3.5 0.9 L5.9 4.4 L1.1 4.4 Z M1.1 6.3 L5.9 6.3 L3.5 9.8 Z" fill="#8a8a8a"/></svg></div>
<div class="grp" style="left:14px;top:789.8px;width:213.5px;height:43.200000000000045px"></div>
<span class="t dis gl" style="top:783.0px;left:16.7px;letter-spacing:0.204px;">Texture</span>
<div class="abs" style="left:19.5px;top:802px;width:202px;height:20px;background:#5a5a5a;border-radius:3px"></div>
<span class="t dis" style="top:807.3px;left:101px;">No Map</span>
<div class="abs" style="left:233px;top:0;width:1.2px;height:812px;background:#474747"></div>
<div class="abs" style="left:234px;top:0;width:7px;height:812px;background:#3b3b3b"></div>
<div class="abs" style="left:236px;top:1px;width:4px;height:21.5px;background:#585858;border-radius:2px"></div>
<div class="abs" style="left:236px;top:31px;width:4px;height:326.5px;background:#585858;border-radius:2px"></div>
</div>
</body></html>
